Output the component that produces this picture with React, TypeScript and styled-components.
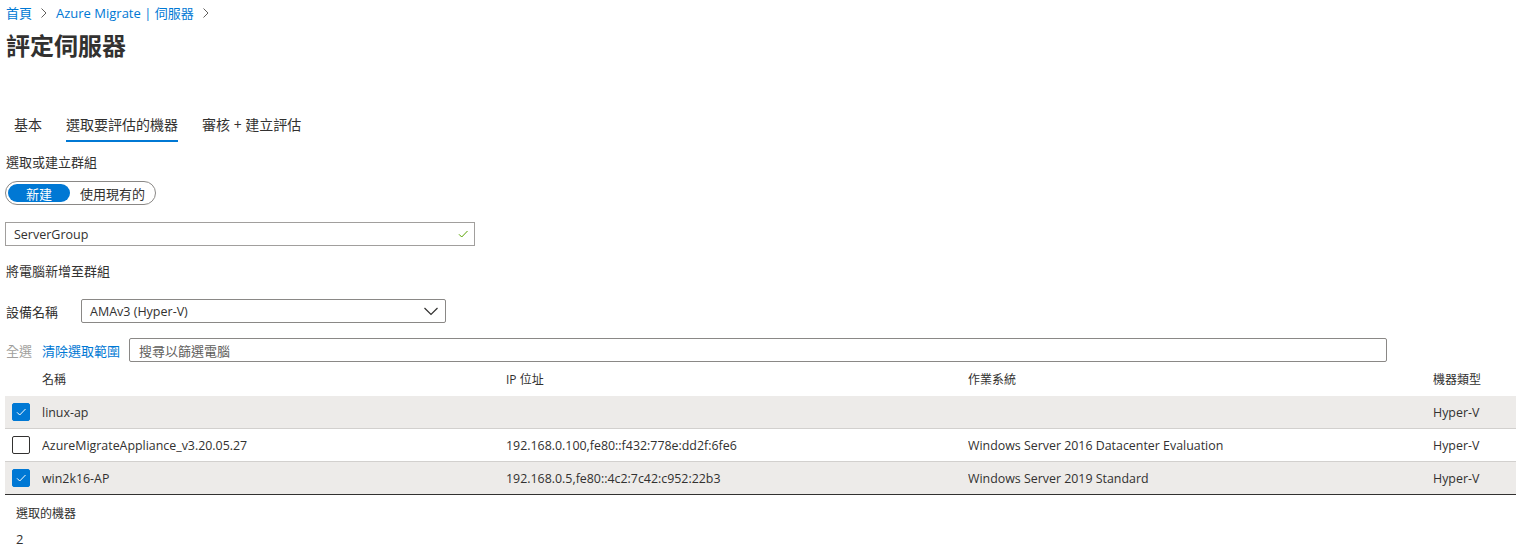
import React from "react";
import styled, { createGlobalStyle } from "styled-components";

const GlobalStyle = createGlobalStyle`
  html, body {
    margin: 0;
    padding: 0;
    background: #ffffff;
  }
  body {
    font-family: "Open Sans", "Noto Sans CJK TC", sans-serif;
    color: #323130;
    font-size: 13px;
    overflow: hidden;
  }
  * { box-sizing: border-box; }
`;

const FONT = `"Open Sans", "Noto Sans CJK TC", sans-serif`;

const Page = styled.div`
  width: 1516px;
  height: 554px;
  padding-left: 5px;
  font-family: ${FONT};
  overflow: hidden;
`;

const Breadcrumb = styled.nav`
  display: flex;
  align-items: center;
  height: 26px;
  padding-left: 1px;
  gap: 8px;
  font-size: 13px;
`;

const Crumb = styled.a`
  color: #0078d4;
  text-decoration: none;
  line-height: 18px;
`;

const Chevron = () => (
  <svg width="8" height="12" viewBox="0 0 8 12">
    <path d="M1.5 1.5 L6 6 L1.5 10.5" fill="none" stroke="#605e5c" strokeWidth="1" />
  </svg>
);

const Title = styled.h1`
  margin: 4px 0 0 1px;
  font-size: 24px;
  font-weight: 600;
  line-height: 32px;
  color: #323130;
`;

const TabBar = styled.div`
  display: flex;
  margin-top: 48px;
  padding-left: 9px;
  gap: 24px;
`;

const Tab = styled.div<{ $active?: boolean }>`
  height: 32px;
  padding-top: 5px;
  font-size: 14px;
  line-height: 20px;
  color: #323130;
  border-bottom: 2px solid ${(p) => (p.$active ? "#0078d4" : "transparent")};
`;

const Label = styled.div<{ $mt: number }>`
  margin-top: ${(p) => p.$mt}px;
  padding-left: 1px;
  font-size: 13px;
  line-height: 20px;
  color: #323130;
`;

const ToggleWrap = styled.div`
  display: block;
`;

const Toggle = styled.div`
  display: inline-flex;
  align-items: center;
  margin-top: 9px;
  width: 151px;
  height: 24px;
  border: 1px solid #8a8886;
  border-radius: 12px;
  padding-left: 2px;
  gap: 10px;
`;

const ToggleOption = styled.span<{ $on?: boolean }>`
  display: inline-flex;
  align-items: center;
  justify-content: center;
  height: 18px;
  width: ${(p) => (p.$on ? "62px" : "auto")};
  border-radius: 9px;
  background: ${(p) => (p.$on ? "#0078d4" : "transparent")};
  color: ${(p) => (p.$on ? "#ffffff" : "#323130")};
  font-size: 13px;
`;

const TextBox = styled.div`
  display: flex;
  align-items: center;
  justify-content: space-between;
  margin-top: 17px;
  width: 470px;
  height: 24px;
  border: 1px solid #a19f9d;
  padding: 0 5px 0 8px;
  font-size: 12.5px;
`;

const DropRow = styled.div`
  display: flex;
  align-items: center;
  margin-top: 18px;
  gap: 20px;
`;

const DropLabel = styled.span`
  padding-left: 1px;
  font-size: 13px;
  width: 56px;
`;

const Dropdown = styled.div`
  display: flex;
  align-items: center;
  justify-content: space-between;
  width: 365px;
  height: 24px;
  border: 1px solid #8a8886;
  border-radius: 2px;
  padding: 0 6px 0 8px;
  font-size: 12.5px;
`;

const SearchRow = styled.div`
  display: flex;
  align-items: center;
  margin-top: 15px;
  height: 24px;
`;

const MutedLink = styled.span`
  padding-left: 1px;
  color: #a19f9d;
  font-size: 13px;
  width: 37px;
`;

const BlueLink = styled.span`
  color: #0078d4;
  font-size: 13px;
  width: 87px;
`;

const SearchBox = styled.div`
  display: flex;
  align-items: center;
  width: 1258px;
  height: 24px;
  border: 1px solid #8a8886;
  border-radius: 2px;
  padding-left: 9px;
  color: #605e5c;
  font-size: 13px;
`;

const Table = styled.div`
  width: 1511px;
  border-bottom: 1px solid #323130;
`;

const Row = styled.div<{ $header?: boolean; $selected?: boolean }>`
  display: grid;
  grid-template-columns: 37px 464px 462px 465px 1fr;
  align-items: center;
  height: ${(p) => (p.$header ? "34px" : "33px")};
  background: ${(p) => (p.$selected ? "#edebe9" : "#ffffff")};
  border-bottom: ${(p) => (p.$header ? "none" : "1px solid #d2d0ce")};
  font-size: ${(p) => (p.$header ? "12px" : "12.4px")};
  color: #323130;
  &:last-child {
    border-bottom: none;
    height: 32px;
  }
`;

const Cell = styled.div`
  white-space: nowrap;
  overflow: hidden;
`;

const CheckCell = styled.div`
  padding-left: 7px;
  display: flex;
  align-items: center;
`;

const CheckBox = styled.span<{ $checked?: boolean }>`
  display: inline-flex;
  align-items: center;
  justify-content: center;
  width: 18px;
  height: 18px;
  border-radius: 2px;
  background: ${(p) => (p.$checked ? "#0078d4" : "#ffffff")};
  border: 1px solid ${(p) => (p.$checked ? "#0078d4" : "#323130")};
`;

const Selected = styled.div`
  padding-left: 11px;
  margin-top: 9px;
`;

const SmallLabel = styled.div`
  font-size: 12px;
  line-height: 20px;
`;

const Count = styled.div`
  margin-top: 5px;
  font-size: 13px;
  line-height: 20px;
`;

const CheckMark = ({ color, size }: { color: string; size: number }) => (
  <svg width={size} height={size} viewBox="0 0 12 12">
    <path d="M2 6.3 L4.7 9 L10.5 3" fill="none" stroke={color} strokeWidth="1" />
  </svg>
);

const ChevronDown = () => (
  <svg width="16" height="10" viewBox="0 0 16 10">
    <path d="M1.5 2 L8 8.5 L14.5 2" fill="none" stroke="#323130" strokeWidth="1.2" />
  </svg>
);

const rows = [
  { name: "linux-ap", ip: "", os: "", type: "Hyper-V", checked: true },
  {
    name: "AzureMigrateAppliance_v3.20.05.27",
    ip: "192.168.0.100,fe80::f432:778e:dd2f:6fe6",
    os: "Windows Server 2016 Datacenter Evaluation",
    type: "Hyper-V",
    checked: false,
  },
  {
    name: "win2k16-AP",
    ip: "192.168.0.5,fe80::4c2:7c42:c952:22b3",
    os: "Windows Server 2019 Standard",
    type: "Hyper-V",
    checked: true,
  },
];

export default function App() {
  return (
    <Page>
      <GlobalStyle />
      <Breadcrumb>
        <Crumb>首頁</Crumb>
        <Chevron />
        <Crumb>Azure Migrate | 伺服器</Crumb>
        <Chevron />
      </Breadcrumb>
      <Title>評定伺服器</Title>
      <TabBar>
        <Tab>基本</Tab>
        <Tab $active>選取要評估的機器</Tab>
        <Tab>審核 + 建立評估</Tab>
      </TabBar>
      <Label $mt={10}>選取或建立群組</Label>
      <ToggleWrap>
        <Toggle>
          <ToggleOption $on>新建</ToggleOption>
          <ToggleOption>使用現有的</ToggleOption>
        </Toggle>
      </ToggleWrap>
      <TextBox>
        <span>ServerGroup</span>
        <CheckMark color="#57a300" size={12} />
      </TextBox>
      <Label $mt={15}>將電腦新增至群組</Label>
      <DropRow>
        <DropLabel>設備名稱</DropLabel>
        <Dropdown>
          <span>AMAv3 (Hyper-V)</span>
          <ChevronDown />
        </Dropdown>
      </DropRow>
      <SearchRow>
        <MutedLink>全選</MutedLink>
        <BlueLink>清除選取範圍</BlueLink>
        <SearchBox>搜尋以篩選電腦</SearchBox>
      </SearchRow>
      <Table>
        <Row $header>
          <Cell />
          <Cell>名稱</Cell>
          <Cell>IP 位址</Cell>
          <Cell>作業系統</Cell>
          <Cell>機器類型</Cell>
        </Row>
        {rows.map((r) => (
          <Row key={r.name} $selected={r.checked}>
            <CheckCell>
              <CheckBox $checked={r.checked}>
                {r.checked && <CheckMark color="#ffffff" size={12} />}
              </CheckBox>
            </CheckCell>
            <Cell>{r.name}</Cell>
            <Cell>{r.ip}</Cell>
            <Cell>{r.os}</Cell>
            <Cell>{r.type}</Cell>
          </Row>
        ))}
      </Table>
      <Selected>
        <SmallLabel>選取的機器</SmallLabel>
        <Count>2</Count>
      </Selected>
    </Page>
  );
}
